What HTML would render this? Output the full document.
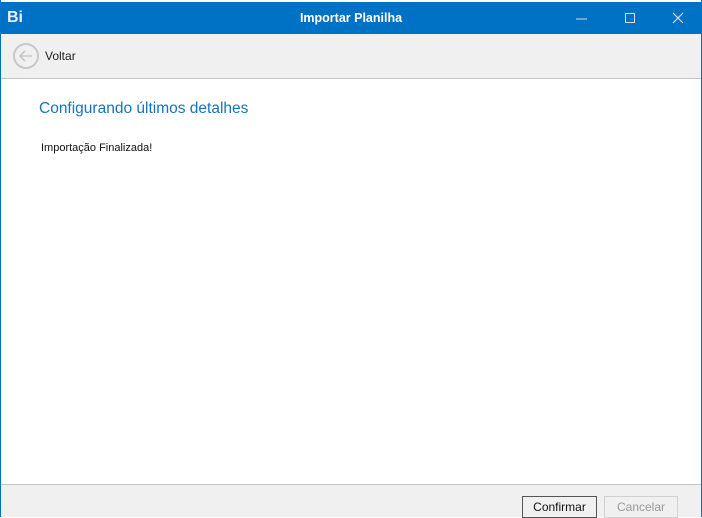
<!DOCTYPE html>
<html><head><meta charset="utf-8"><style>
*{margin:0;padding:0;box-sizing:border-box}
body{width:702px;height:517px;overflow:hidden;background:#fff;font-family:"Liberation Sans",sans-serif;position:relative}
.win{position:absolute;left:0;top:0;width:702px;height:517px;border-left:1px solid #0072c6;border-right:1px solid #0072c6;background:#fff}
.title{position:absolute;left:0;top:2px;width:702px;height:32px;background:#0072c6;color:#fff}
.title .t{position:absolute;left:0;right:0;top:9px;text-align:center;font-weight:bold;font-size:12.5px}
.bi{position:absolute;left:7px;top:7px;font-weight:bold;font-size:16px;color:#e8eef5}
.tb{position:absolute;left:1px;top:34px;width:700px;height:45px;background:#f0f0f0;border-bottom:1px solid #c4c4c4}
.foot{position:absolute;left:1px;top:484px;width:700px;height:33px;background:#f0f0f0;border-top:1px solid #c4c4c4}
.btn{position:absolute;top:496px;height:22px;font-size:12px;text-align:center;line-height:20px;background:#f0f0f0}
</style></head><body>
<div class="win"></div>
<div class="title"><div class="bi">Bi</div><div class="t">Importar Planilha</div>
<svg width="702" height="32" style="position:absolute;left:0;top:0">
<line x1="576" y1="17" x2="587" y2="17" stroke="#dcdcdc" stroke-width="1"/>
<rect x="625.5" y="11.5" width="9" height="9" fill="none" stroke="#dcdcdc"/>
<path d="M673 11L683 21M683 11L673 21" stroke="#dcdcdc" stroke-width="1.2"/>
</svg></div>
<div class="tb">
<svg width="30" height="30" style="position:absolute;left:11px;top:8px"><circle cx="14" cy="14" r="12" fill="none" stroke="#c8c8c8" stroke-width="2"/><path d="M20 14H9M13 9L8 14L13 19" fill="none" stroke="#c8c8c8" stroke-width="1.6"/></svg>
<div style="position:absolute;left:44px;top:15px;font-size:12px;color:#222">Voltar</div></div>
<div style="position:absolute;left:39px;top:100px;font-size:15.5px;color:#1a73b8">Configurando últimos detalhes</div>
<div style="position:absolute;left:41px;top:142px;font-size:11px;color:#111">Importação Finalizada!</div>
<div class="foot"></div>
<div class="btn" style="left:522px;width:75px;border:1px solid #555;color:#111">Confirmar</div>
<div class="btn" style="left:604px;width:74px;border:1px solid #d0d0d0;color:#999">Cancelar</div>
</body></html>
